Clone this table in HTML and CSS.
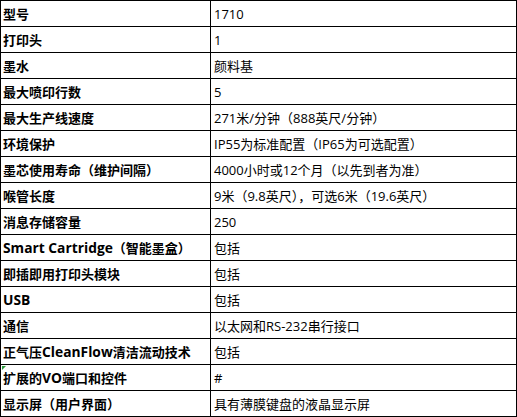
FILE: index.html
```html
<!DOCTYPE html>
<html lang="zh-CN">
<head>
<meta charset="utf-8">
<title>规格</title>
<link rel="stylesheet" href="styles.css">
</head>
<body>
<table class="spec">
  <colgroup><col class="c-key"><col class="c-val"></colgroup>
  <tbody>
    <tr><th>型号</th><td>1710</td></tr>
    <tr><th>打印头</th><td>1</td></tr>
    <tr><th>墨水</th><td>颜料基</td></tr>
    <tr><th>最大喷印行数</th><td>5</td></tr>
    <tr><th>最大生产线速度</th><td>271米/分钟（888英尺/分钟）</td></tr>
    <tr><th>环境保护</th><td>IP55为标准配置（IP65为可选配置）</td></tr>
    <tr><th>墨芯使用寿命（维护间隔）</th><td>4000小时或12个月（以先到者为准）</td></tr>
    <tr><th>喉管长度</th><td>9米（9.8英尺），可选6米（19.6英尺）</td></tr>
    <tr><th>消息存储容量</th><td>250</td></tr>
    <tr><th><span class="en">Smart Cartridge</span>（智能墨盒）</th><td>包括</td></tr>
    <tr><th>即插即用打印头模块</th><td>包括</td></tr>
    <tr><th><span class="en">USB</span></th><td>包括</td></tr>
    <tr><th>通信</th><td>以太网和RS-232串行接口</td></tr>
    <tr><th>正气压<span class="en">CleanFlow</span>清洁流动技术</th><td>包括</td></tr>
    <tr><th class="flag">扩展的<span class="en">VO</span>端口和控件</th><td>#</td></tr>
    <tr><th>显示屏（用户界面）</th><td>具有薄膜键盘的液晶显示屏</td></tr>
  </tbody>
</table>
</body>
</html>
```
FILE: styles.css
```css
html, body {
  margin: 0;
  padding: 0;
  background: #ffffff;
}

.spec {
  border-collapse: collapse;
  width: 517px;
  table-layout: fixed;
  font-family: "Open Sans", "Noto Sans CJK SC", sans-serif;
  font-size: 13px;
  color: #000000;
}

.c-key { width: 210px; }

.spec th,
.spec td {
  border: 1px solid #000000;
  height: 25px;
  padding: 0 2px 0 3px;
  text-align: left;
  vertical-align: middle;
  white-space: nowrap;
  line-height: 16px;
  box-sizing: border-box;
}

.spec th {
  font-weight: 700;
  padding-left: 2px;
}

.spec th .en {
  font-size: 13.8px;
}

.spec td {
  font-weight: 400;
}

.spec tr { height: 26px; }

.spec .flag { position: relative; }
.spec .flag::before {
  content: "";
  position: absolute;
  left: 1px;
  top: 1px;
  width: 0;
  height: 0;
  border-top: 4px solid #2a9a3a;
  border-right: 4px solid transparent;
}
```
